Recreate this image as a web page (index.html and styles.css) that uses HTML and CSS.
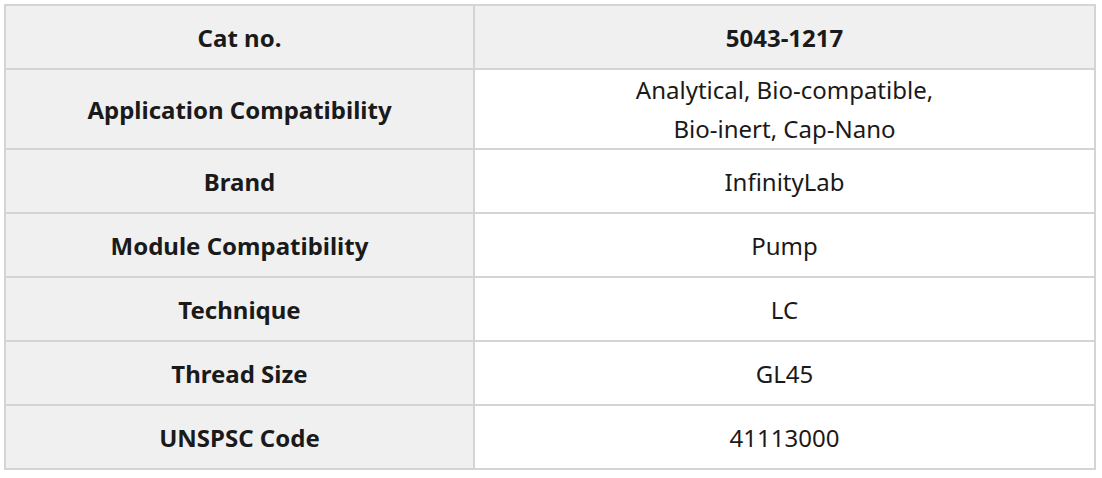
FILE: index.html
```html
<!DOCTYPE html>
<html lang="en">
<head>
<meta charset="utf-8">
<link rel="stylesheet" href="styles.css">
</head>
<body>
<div class="wrap">
<table class="spec">
  <colgroup><col class="c1"><col class="c2"></colgroup>
  <tr class="head"><th>Cat no.</th><th>5043-1217</th></tr>
  <tr><th>Application Compatibility</th><td>Analytical, Bio-compatible,<br>Bio-inert, Cap-Nano</td></tr>
  <tr><th>Brand</th><td>InfinityLab</td></tr>
  <tr><th>Module Compatibility</th><td>Pump</td></tr>
  <tr><th>Technique</th><td>LC</td></tr>
  <tr><th>Thread Size</th><td>GL45</td></tr>
  <tr><th>UNSPSC Code</th><td>41113000</td></tr>
</table>
</div>
</body>
</html>
```
FILE: styles.css
```css
html, body { margin: 0; padding: 0; background: #fff; }
.wrap { padding: 4px 6px 6px 4px; }
.spec {
  width: 1092px;
  border-collapse: collapse;
  table-layout: fixed;
  font-family: "Noto Sans", "Noto Sans CJK KR", sans-serif;
  font-size: 24px;
  color: #1a1a1a;
}
.c1 { width: 469px; }
.spec th, .spec td {
  border: 2px solid #d4d4d4;
  height: 62px;
  padding: 0 10px;
  line-height: 39px;
  text-align: center;
  vertical-align: middle;
}
.spec th { background: #f0f0f0; font-weight: 700; }
.spec td { background: #fff; font-weight: 400; }
.spec .head th { background: #f0f0f0; }
```
